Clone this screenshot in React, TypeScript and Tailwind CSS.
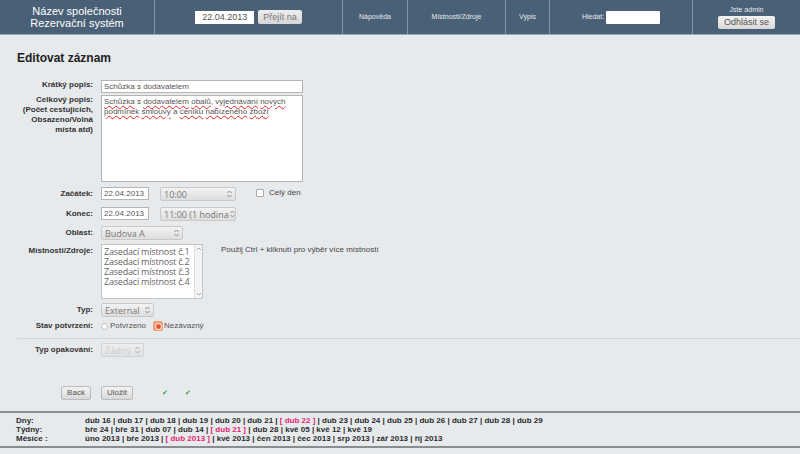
import React from "react";

const Arrows: React.FC = () => (
  <svg width="5" height="8" viewBox="0 0 5 8" className="shrink-0">
    <path d="M0.5 3 L2.5 1 L4.5 3" fill="none" stroke="#888" strokeWidth="1" />
    <path d="M0.5 5 L2.5 7 L4.5 5" fill="none" stroke="#888" strokeWidth="1" />
  </svg>
);

const Select: React.FC<{ value: string; w: string; disabled?: boolean }> = ({ value, w, disabled }) => (
  <div
    className={`${w} h-[14px] flex items-center justify-between gap-[1px] pl-[3px] pr-[3px] rounded-[2px] border border-[#c9c9c9] bg-gradient-to-b from-[#f2f2f2] to-[#dedede] text-[9px] leading-none whitespace-nowrap ${
      disabled ? "text-[#c4c4c4] opacity-70" : "text-[#777]"
    }`}
    style={{ fontFamily: '"Open Sans", sans-serif' }}
  >
    <span>{value}</span>
    <Arrows />
  </div>
);

const TextInput: React.FC<{ value: string; w: string }> = ({ value, w }) => (
  <div className={`${w} h-[13px] bg-white border border-[#b5b5b5] px-[2px] text-[8px] leading-[11px] text-[#555]`}>{value}</div>
);

const Row: React.FC<{ label: React.ReactNode; className?: string; children: React.ReactNode }> = ({ label, className = "", children }) => (
  <div className={`flex ${className}`}>
    <div className="w-[93px] text-right font-bold text-[8px] leading-[10px] text-[#333] shrink-0">{label}</div>
    <div className="ml-[8px] flex items-start">{children}</div>
  </div>
);

const days = ["dub 16", "dub 17", "dub 18", "dub 19", "dub 20", "dub 21", "dub 22", "dub 23", "dub 24", "dub 25", "dub 26", "dub 27", "dub 28", "dub 29"];
const weeks = ["bře 24", "bře 31", "dub 07", "dub 14", "dub 21", "dub 28", "kvě 05", "kvě 12", "kvě 19"];
const months = ["úno 2013", "bře 2013", "dub 2013", "kvě 2013", "čen 2013", "čec 2013", "srp 2013", "zář 2013", "říj 2013"];

const NavList: React.FC<{ items: string[]; current: string }> = ({ items, current }) => (
  <div className="whitespace-nowrap">
    {items.map((it, i) => (
      <span key={it}>
        {i > 0 && " | "}
        {it === current ? <span className="text-[#e8246e]">[ {it} ]</span> : it}
      </span>
    ))}
  </div>
);

const App: React.FC = () => {
  const wavy = "underline decoration-wavy decoration-[#e02020] decoration-[1px] underline-offset-[1px]";
  return (
    <div className="w-[800px] h-[454px] bg-[#e7eaed] overflow-hidden" style={{ fontFamily: '"Liberation Sans", Arial, sans-serif' }}>
      {/* Header */}
      <div className="h-[35px] flex bg-[#4a6077] border-b border-[#9aa9b8] text-[#e4e9ee]">
        <div className="w-[155px] border-r border-[#8596a8] flex flex-col items-center justify-center text-[11px] leading-[12px] text-white">
          <span>Název společnosti</span>
          <span>Rezervační systém</span>
        </div>
        <div className="w-[188px] border-r border-[#8596a8] flex items-center justify-center gap-[4px]">
          <div className="w-[59px] h-[13px] bg-white text-[#555] text-[9px] leading-[13px] text-center">22.04.2013</div>
          <div className="h-[14px] px-[5px] rounded-[2px] bg-gradient-to-b from-[#eee] to-[#d6d6d6] text-[#777] text-[9px] leading-[14px]">Přejít na</div>
        </div>
        <div className="w-[65px] border-r border-[#8596a8] flex items-center justify-center text-[7px]">Nápověda</div>
        <div className="w-[98px] border-r border-[#8596a8] flex items-center justify-center text-[7px]">Místnosti/Zdroje</div>
        <div className="w-[44px] border-r border-[#8596a8] flex items-center justify-center text-[7px]">Výpis</div>
        <div className="w-[143px] border-r border-[#8596a8] flex items-center justify-center gap-[2px] text-[7px]">
          <span>Hledat:</span>
          <div className="w-[54px] h-[13px] bg-white rounded-[1px]" />
        </div>
        <div className="flex-1 flex flex-col items-center justify-center gap-[2px]">
          <span className="text-[7px] leading-[8px]">Jste admin</span>
          <div className="h-[13px] px-[6px] rounded-[2px] bg-gradient-to-b from-[#f3f3f3] to-[#d8d8d8] text-[#555] text-[9px] leading-[13px]">Odhlásit se</div>
        </div>
      </div>

      {/* Title */}
      <div className="pl-[17px] mt-[16px] text-[12px] leading-[14px] font-bold text-[#222]">Editovat záznam</div>

      {/* Form */}
      <div className="mt-[15px] flex flex-col">
        <Row label="Krátký popis:">
          <TextInput value="Schůzka s dodavatelem" w="w-[202px]" />
        </Row>
        <Row
          className="mt-[2px]"
          label={
            <>
              Celkový popis:
              <br />
              (Počet cestujících,
              <br />
              Obsazeno/Volná
              <br />
              místa atd)
            </>
          }
        >
          <div className="w-[202px] h-[87px] bg-white border border-[#b5b5b5] px-[2px] pt-[1px] text-[8px] leading-[10px] text-[#555]">
            <span className={wavy}>Schůzka</span> s <span className={wavy}>dodavatelem</span> <span className={wavy}>obalů</span>,{" "}
            <span className={wavy}>vyjednávání</span> <span className={wavy}>nových</span>
            <br />
            <span className={wavy}>podmínek</span> <span className={wavy}>smlouvy</span> a <span className={wavy}>ceníku</span>{" "}
            <span className={wavy}>nabízeného</span> <span className={wavy}>zboží</span>
          </div>
        </Row>
        <Row label={<span className="leading-[13px]">Začátek:</span>} className="mt-[5px]">
          <TextInput value="22.04.2013" w="w-[48px]" />
          <div className="ml-[11px]">
            <Select value="10:00" w="w-[76px]" />
          </div>
          <div className="ml-[20px] flex items-center gap-[5px] text-[8px] text-[#444]">
            <div className="w-[8px] h-[8px] bg-white border border-[#aaa] rounded-[1px]" />
            <span>Celý den</span>
          </div>
        </Row>
        <Row label={<span className="leading-[13px]">Konec:</span>} className="mt-[6px]">
          <TextInput value="22.04.2013" w="w-[48px]" />
          <div className="ml-[11px]">
            <Select value="11:00 (1 hodina" w="w-[76px]" />
          </div>
        </Row>
        <Row label={<span className="leading-[13px]">Oblast:</span>} className="mt-[5px]">
          <Select value="Budova A" w="w-[82px]" />
        </Row>
        <Row label={<span className="leading-[13px]">Místnosti/Zdroje:</span>} className="mt-[4px]">
          <div className="w-[102px] h-[55px] bg-white border border-[#c4c4c4] flex">
            <div
              className="flex-1 overflow-hidden whitespace-nowrap pl-[2px] pt-[2px] text-[9px] leading-[10px] tracking-[-0.2px] text-[#666]"
              style={{ fontFamily: '"Open Sans", sans-serif' }}
            >
              <div>Zasedací místnost č.1</div>
              <div>Zasedací místnost č.2</div>
              <div>Zasedací místnost č.3</div>
              <div>Zasedací místnost č.4</div>
            </div>
            <div className="w-[8px] border-l border-[#ddd] bg-[#f4f4f4] flex flex-col justify-between items-center py-[1px]">
              <svg width="6" height="6" viewBox="0 0 6 6">
                <path d="M1 4 L3 2 L5 4" fill="none" stroke="#aaa" strokeWidth="1" />
              </svg>
              <svg width="6" height="6" viewBox="0 0 6 6">
                <path d="M1 2 L3 4 L5 2" fill="none" stroke="#aaa" strokeWidth="1" />
              </svg>
            </div>
          </div>
          <div className="ml-[18px] mt-[1px] text-[8px] leading-[10px] text-[#444]">Použij Ctrl + kliknutí pro výběr více místností</div>
        </Row>
        <Row label={<span className="leading-[14px]">Typ:</span>} className="mt-[4px]">
          <Select value="External" w="w-[53px]" />
        </Row>
        <Row label={<span className="leading-[12px]">Stav potvrzení:</span>} className="mt-[3px]">
          <div className="flex items-center h-[12px] text-[8px] text-[#555]">
            <div className="w-[7px] h-[7px] rounded-full bg-white border border-[#bbb]" />
            <span className="ml-[2px]">Potvrzeno</span>
            <div className="ml-[7px] w-[10px] h-[10px] rounded-[2px] bg-[#f3a07a] flex items-center justify-center">
              <div className="w-[7px] h-[7px] rounded-full bg-[#e8542a] border border-white" />
            </div>
            <span className="ml-[1px]">Nezávazný</span>
          </div>
        </Row>
        <div className="ml-[17px] mt-[6px] h-px bg-[#d2d6da]" />
        <Row label={<span className="leading-[14px]">Typ opakování:</span>} className="mt-[4px]">
          <Select value="Žádný" w="w-[43px]" disabled />
        </Row>
        <div className="mt-[29px] flex items-center">
          <div className="ml-[61px] h-[14px] w-[30px] rounded-[2px] border border-[#bbb] bg-gradient-to-b from-[#f2f2f2] to-[#d9d9d9] text-[8px] leading-[12px] text-center text-[#555]">Back</div>
          <div className="ml-[10px] h-[14px] w-[32px] rounded-[2px] border border-[#bbb] bg-gradient-to-b from-[#f2f2f2] to-[#d9d9d9] text-[8px] leading-[12px] text-center text-[#555]">Uložit</div>
          <span className="ml-[29px] text-[7px] text-[#3a9a3a]">✔</span>
          <span className="ml-[17px] text-[7px] text-[#3a9a3a]">✔</span>
        </div>
      </div>

      {/* Footer nav */}
      <div className="mt-[11px] border-t-2 border-b-2 border-[#8a8c8e] py-[3px] text-[8px] leading-[9px] font-bold text-[#2a2a2a] flex">
        <div className="w-[85px] pl-[16px] shrink-0">
          <div>Dny:</div>
          <div>Týdny:</div>
          <div>Měsíce :</div>
        </div>
        <div>
          <NavList items={days} current="dub 22" />
          <NavList items={weeks} current="dub 21" />
          <NavList items={months} current="dub 2013" />
        </div>
      </div>
    </div>
  );
};

export default App;
